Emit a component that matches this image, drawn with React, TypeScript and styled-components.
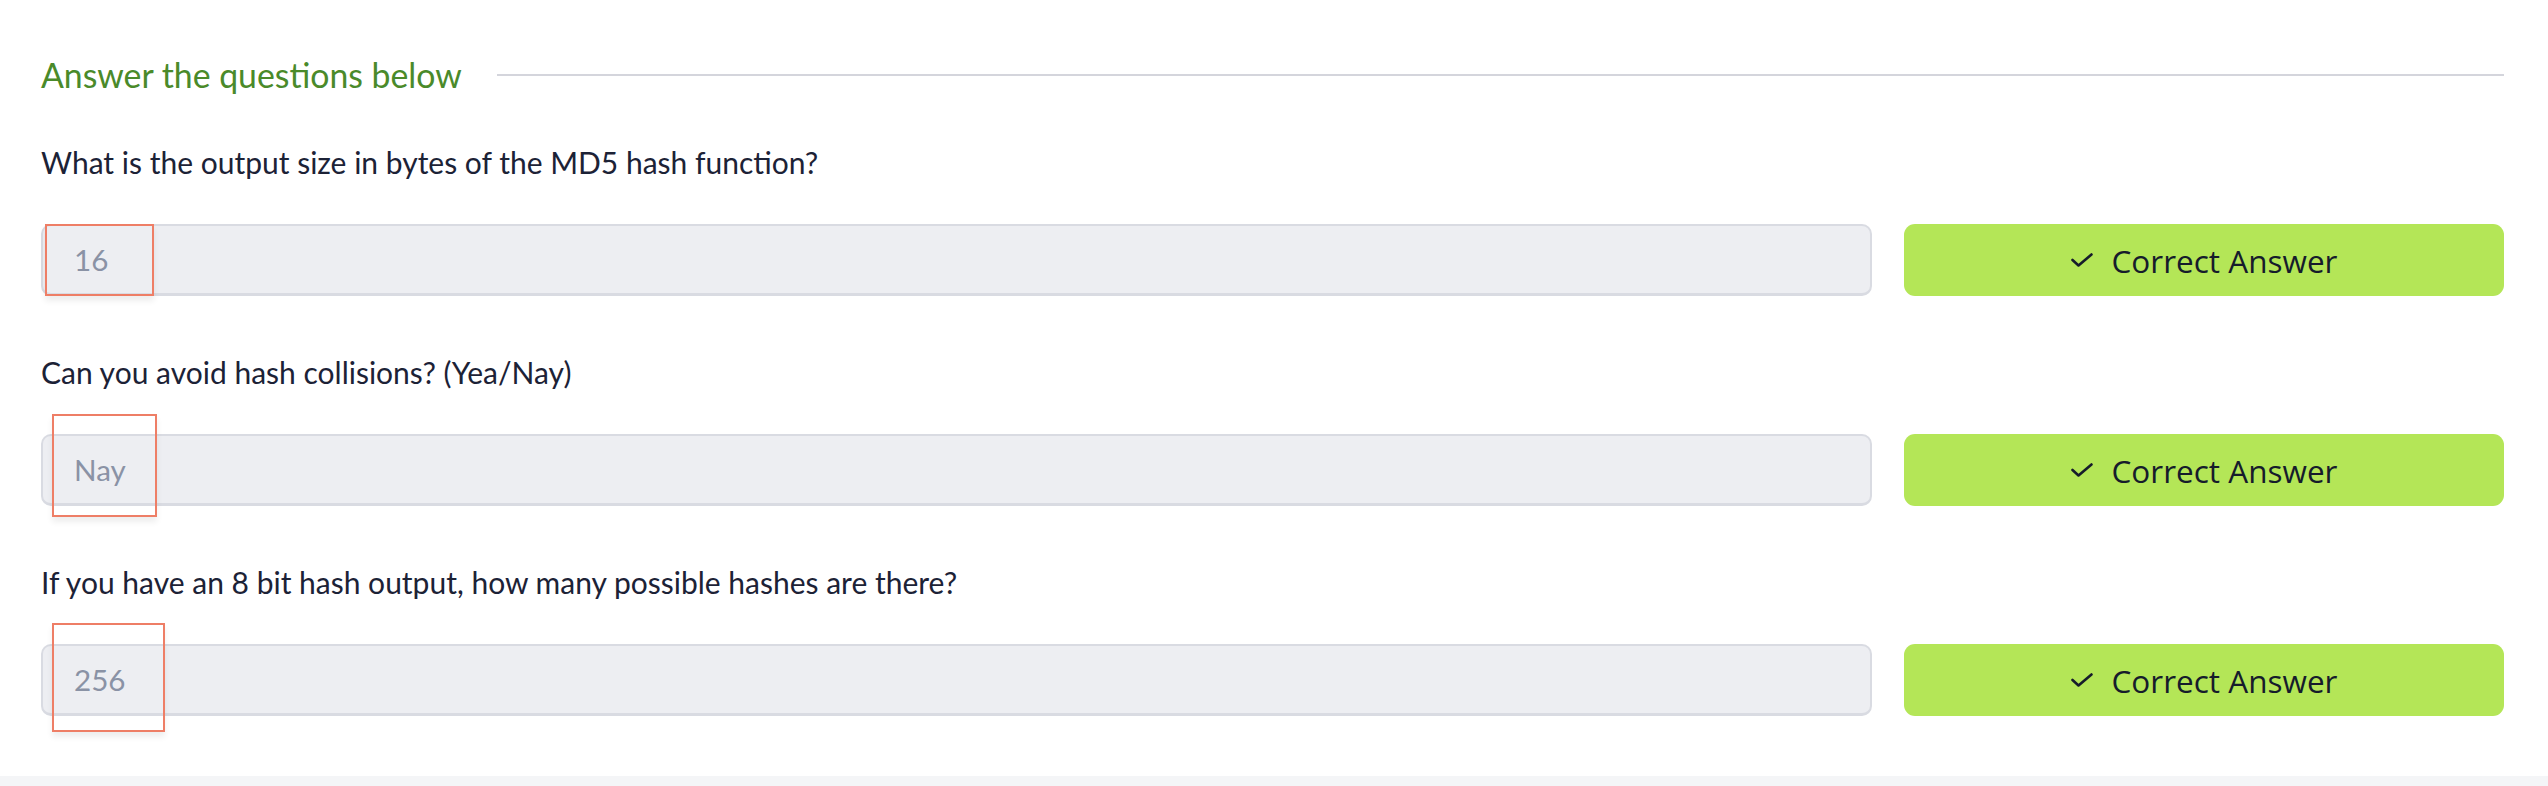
import React from 'react';
import styled, { createGlobalStyle } from 'styled-components';

// 전역 스타일
const GlobalStyle = createGlobalStyle`
  html, body {
    margin: 0;
    padding: 0;
    background: #f4f5f7;
  }
  * {
    box-sizing: border-box;
  }
`;

const Card = styled.div`
  background: #ffffff;
  height: 776px;
  padding: 51px 44px 0 41px;
  box-shadow: 0 0 40px rgba(20, 30, 60, 0.05);
`;

const HeadingRow = styled.div`
  display: flex;
  align-items: center;
  gap: 35px;
  height: 48px;
  margin-bottom: 41px;
`;

const Heading = styled.h3`
  margin: 0;
  font-family: Lato, 'Liberation Sans', sans-serif;
  font-weight: 400;
  font-size: 33.8px;
  line-height: 48px;
  color: #4a8a2a;
  white-space: nowrap;
`;

const Rule = styled.div`
  flex: 1;
  height: 2px;
  background: #d4d5dc;
`;

const Block = styled.div`
  margin-bottom: 54px;
`;

const Question = styled.p`
  margin: 0 0 40px;
  font-family: Lato, 'Liberation Sans', sans-serif;
  font-size: 30px;
  line-height: 44px;
  color: #1c2236;
`;

const Row = styled.div`
  position: relative;
  display: flex;
  gap: 32px;
  height: 72px;
`;

const AnswerField = styled.div`
  flex: 1;
  display: flex;
  align-items: center;
  padding-left: 31px;
  background: #edeef2;
  border: 2px solid #d9dbe2;
  border-bottom-width: 3px;
  border-radius: 10px;
  font-family: Lato, 'Liberation Sans', sans-serif;
  font-size: 29.6px;
  color: #8a92a5;
`;

const CorrectButton = styled.button`
  width: 600px;
  display: flex;
  align-items: center;
  justify-content: center;
  gap: 19px;
  border: none;
  border-radius: 11px;
  background: #b4e657;
  font-family: 'Open Sans', 'Noto Sans', sans-serif;
  font-size: 31.5px;
  color: #161c2b;
  cursor: pointer;
`;

const Marker = styled.div<{ $left: number; $top: number; $w: number; $h: number }>`
  position: absolute;
  left: ${(p) => p.$left}px;
  top: ${(p) => p.$top}px;
  width: ${(p) => p.$w}px;
  height: ${(p) => p.$h}px;
  border: 2px solid #ee7e66;
  box-shadow: 0 5px 6px rgba(0, 0, 0, 0.07);
  pointer-events: none;
`;

const CheckIcon = () => (
  <svg width="22" height="14" viewBox="0 0 22 14" fill="none">
    <path d="M1.5 7 L7.5 12.5 L20.5 1.5" stroke="#161c2b" strokeWidth="2.6" strokeLinecap="round" strokeLinejoin="round" />
  </svg>
);

const questions = [
  {
    text: 'What is the output size in bytes of the MD5 hash function?',
    answer: '16',
    marker: { left: 4, top: 0, w: 109, h: 72 },
  },
  {
    text: 'Can you avoid hash collisions? (Yea/Nay)',
    answer: 'Nay',
    marker: { left: 11, top: -20, w: 105, h: 103 },
  },
  {
    text: 'If you have an 8 bit hash output, how many possible hashes are there?',
    answer: '256',
    marker: { left: 11, top: -21, w: 113, h: 109 },
  },
];

const App = () => {
  return (
    <>
      <GlobalStyle />
      <Card>
        <HeadingRow>
          <Heading>Answer the questions below</Heading>
          <Rule />
        </HeadingRow>
        {questions.map((q, index) => (
          <Block key={index}>
            <Question>{q.text}</Question>
            <Row>
              <AnswerField>{q.answer}</AnswerField>
              <CorrectButton>
                <CheckIcon />
                Correct Answer
              </CorrectButton>
              <Marker $left={q.marker.left} $top={q.marker.top} $w={q.marker.w} $h={q.marker.h} />
            </Row>
          </Block>
        ))}
      </Card>
    </>
  );
};

export default App;
